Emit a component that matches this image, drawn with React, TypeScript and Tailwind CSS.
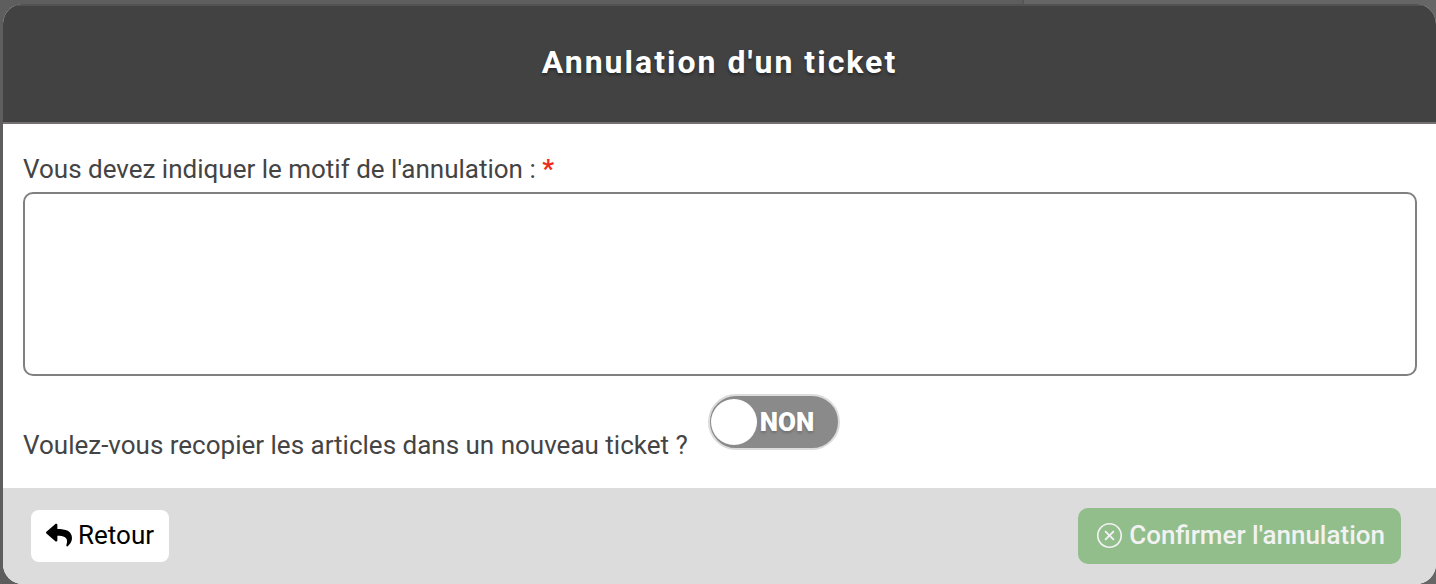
import { useState } from 'react'
import { FaReply } from 'react-icons/fa'
import { IoIosCloseCircleOutline } from 'react-icons/io'

export default function App() {
  const [reason, setReason] = useState('')
  const [copyItems, setCopyItems] = useState(false)

  return (
    <div className="flex min-h-screen flex-col bg-[linear-gradient(to_right,#5e5e5e_1022px,#565656_1022px,#565656_1024px,#666666_1024px)] pt-1 pl-[3px] font-['Roboto',sans-serif] text-[26px] leading-8 text-[#444444]">
      <section
        role="dialog"
        aria-labelledby="cancel-title"
        className="flex grow flex-col overflow-hidden rounded-[20px] bg-white"
      >
        <header className="border-y-2 border-t-[#525252] border-b-[#757171] bg-[#424242] pt-9 pb-10 text-center">
          <h1
            id="cancel-title"
            className="text-[32px] leading-10 font-bold tracking-[2px] text-white [text-shadow:0_2px_3px_rgba(0,0,0,0.4)]"
          >
            Annulation d'un ticket
          </h1>
        </header>

        <div className="grow pt-7 pr-[19px] pl-5">
          <label htmlFor="reason" className="block pt-px">
            Vous devez indiquer le motif de l'annulation :{' '}
            <span className="font-bold text-[#ee2c1c]">*</span>
          </label>
          <textarea
            id="reason"
            required
            value={reason}
            onChange={(e) => setReason(e.target.value)}
            className="mt-[7px] block h-46 w-full resize-none rounded-[10px] border-2 border-[#808080] bg-white px-3 py-2 outline-none"
          />

          <div className="mt-[18px] flex items-start gap-5">
            <label htmlFor="copy-items" className="pt-[35px]">
              Voulez-vous recopier les articles dans un nouveau ticket ?
            </label>
            <Toggle id="copy-items" checked={copyItems} onChange={setCopyItems} />
          </div>
        </div>

        <footer className="flex items-center justify-between bg-[#dcdcdc] py-5 pr-[35px] pl-7">
          <button
            type="button"
            className="flex h-13 items-center gap-1.5 rounded-lg bg-white px-[15px] pb-0.5 text-black"
          >
            <FaReply size={26} />
            Retour
          </button>
          <button
            type="submit"
            disabled={!reason}
            className="flex h-14 items-center gap-1 rounded-[10px] bg-[#91be8b] px-4 pb-0.5 font-medium text-[#f2f2f2]"
          >
            <IoIosCloseCircleOutline size={31} />
            Confirmer l'annulation
          </button>
        </footer>
      </section>
    </div>
  )
}

interface ToggleProps {
  id: string
  checked: boolean
  onChange: (checked: boolean) => void
}

function Toggle({ id, checked, onChange }: ToggleProps) {
  return (
    <span className="relative block h-14 w-33">
      <input
        id={id}
        type="checkbox"
        role="switch"
        checked={checked}
        onChange={(e) => onChange(e.target.checked)}
        className="peer block size-full appearance-none rounded-full border-2 border-[#dcdcdc] bg-[#8a8a8a] checked:bg-[#6aa962]"
      />
      <span className="pointer-events-none absolute top-[5px] left-[3px] size-[46px] rounded-full bg-white peer-checked:right-1 peer-checked:left-auto" />
      <span className="pointer-events-none absolute top-3 left-13 font-black text-white [text-shadow:0_2px_3px_rgba(0,0,0,0.2)] peer-checked:left-5">
        {checked ? 'OUI' : 'NON'}
      </span>
    </span>
  )
}
